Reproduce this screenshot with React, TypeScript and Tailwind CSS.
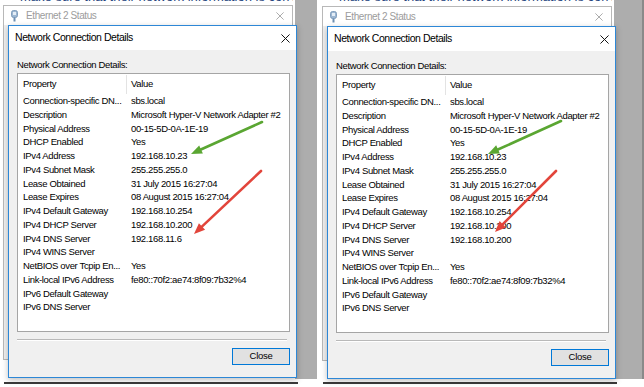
// Two "Network Connection Details" screenshots side by side, with arrows drawn over them.
type Row = [string, string];

const makeRows = (dns: string): Row[] => [
  ["Connection-specific DN...", "sbs.local"],
  ["Description", "Microsoft Hyper-V Network Adapter #2"],
  ["Physical Address", "00-15-5D-0A-1E-19"],
  ["DHCP Enabled", "Yes"],
  ["IPv4 Address", "192.168.10.23"],
  ["IPv4 Subnet Mask", "255.255.255.0"],
  ["Lease Obtained", "31 July 2015 16:27:04"],
  ["Lease Expires", "08 August 2015 16:27:04"],
  ["IPv4 Default Gateway", "192.168.10.254"],
  ["IPv4 DHCP Server", "192.168.10.200"],
  ["IPv4 DNS Server", dns],
  ["IPv4 WINS Server", ""],
  ["NetBIOS over Tcpip En...", "Yes"],
  ["Link-local IPv6 Address", "fe80::70f2:ae74:8f09:7b32%4"],
  ["IPv6 Default Gateway", ""],
  ["IPv6 DNS Server", ""],
];

function CloseX({ size, color }: { size: number; color: string }) {
  return (
    <svg width={size} height={size} viewBox="0 0 10 10" className="shrink-0">
      <path d="M0.5 0.5 L9.5 9.5 M9.5 0.5 L0.5 9.5" stroke={color} strokeWidth="1.1" fill="none" />
    </svg>
  );
}

function AdapterIcon() {
  return (
    <svg width="7" height="12" viewBox="0 0 7 12" className="shrink-0">
      <rect x="0.5" y="0.5" width="6" height="7" rx="2" fill="#9db7d2" stroke="#6f8fb2" strokeWidth="0.8" />
      <rect x="2" y="2" width="3" height="3" fill="#e4edf6" />
      <rect x="2.5" y="7.5" width="2" height="4" fill="#6f8fb2" />
    </svg>
  );
}

function Dialog({ dns }: { dns: string }) {
  return (
    <div className="flex h-[353px] w-[289px] flex-col border border-[#2d87d6] bg-[#f0f0f0] shadow-[0_2px_6px_rgba(0,0,0,0.25)]">
      <div className="flex h-[24px] shrink-0 items-center justify-between bg-white pl-[6px] pr-[6px]">
        <span className="text-[10.5px] tracking-[-0.45px] text-black">Network Connection Details</span>
        <CloseX size={9} color="#111" />
      </div>
      <div className="flex flex-1 flex-col pl-[8px] pr-[6px]">
        <div className="mt-[10px] text-[9.5px] leading-[10px] tracking-[-0.35px] text-black">
          Network Connection Details:
        </div>
        <div className="mt-[3px] h-[259px] shrink-0 border border-[#a5a5a5] bg-white text-[9.5px] tracking-[-0.35px] text-black">
          <div className="flex h-[20px] items-center">
            <span className="w-[108px] pl-[5px]">Property</span>
            <span className="h-[19px] w-px bg-[#e3e3e3]" />
            <span className="pl-[4px]">Value</span>
          </div>
          {makeRows(dns).map(([k, v]) => (
            <div key={k} className="flex h-[13.75px] items-center leading-[13.75px]">
              <span className="w-[113px] shrink-0 whitespace-nowrap pl-[5px]">{k}</span>
              <span className="whitespace-nowrap">{v}</span>
            </div>
          ))}
        </div>
        <div className="mt-[7px] w-[270px] border-t border-b border-t-[#b9b9b9] border-b-white" />
        <button
          type="button"
          className="mt-[7px] flex h-[17px] w-[58px] items-center justify-center self-end border border-[#0078d7] bg-[#e1e1e1] text-[9.5px] tracking-[-0.3px] text-black"
        >
          Close
        </button>
      </div>
    </div>
  );
}

function Screenshot({ dns, width, band, low }: { dns: string; width: string; band: string; low: boolean }) {
  return (
    <div className={`relative h-[387px] shrink-0 overflow-hidden bg-white ${width}`}>
      <div className="flex h-[379px]">
        {/* page text peeking above the captured windows */}
        <div className="h-[5px] w-[293px] shrink-0 overflow-hidden">
          <div className="-mt-[11px] whitespace-nowrap pl-[20px] text-[13px] leading-[15px] text-[#27457e]">
            make sure that their network information is correct
          </div>
        </div>
        <div className={`ml-[2px] flex-1 ${band}`} />
      </div>
      <div className="ml-[4px] mt-[3px] h-[2px] w-[294px] bg-[#3b3b3b]" />

      {/* Ethernet 2 Status window (behind) */}
      <div className={`absolute left-[3px] h-[355px] w-[290px] border border-[#b8b8b8] bg-[#f0f0f0] ${low ? "top-[6px]" : "top-[5px]"}`}>
        <div className="flex h-[19px] items-center justify-between bg-white pl-[7px] pr-[8px]">
          <div className="flex items-center gap-[8px]">
            <AdapterIcon />
            <span className="text-[10px] tracking-[-0.4px] text-[#9c9c9c]">Ethernet 2 Status</span>
          </div>
          <CloseX size={8} color="#a0a0a0" />
        </div>
      </div>

      {/* Network Connection Details dialog (front) */}
      <div className={`absolute left-[8px] ${low ? "top-[26px]" : "top-[25px]"}`}>
        <Dialog dns={dns} />
      </div>
    </div>
  );
}

function Arrow({ x1, y1, x2, y2, color }: { x1: number; y1: number; x2: number; y2: number; color: string }) {
  const dx = x2 - x1;
  const dy = y2 - y1;
  const len = Math.hypot(dx, dy);
  const ux = dx / len;
  const uy = dy / len;
  const head = 11;
  const half = 4.5;
  const bx = x2 - ux * head;
  const by = y2 - uy * head;
  const pts = `${x2},${y2} ${bx - uy * half},${by + ux * half} ${bx + uy * half},${by - ux * half}`;
  return (
    <g>
      <line x1={x1} y1={y1} x2={bx + ux * 2} y2={by + uy * 2} stroke={color} strokeWidth="2.6" strokeLinecap="round" />
      <polygon points={pts} fill={color} />
    </g>
  );
}

export default function App() {
  return (
    <div className="relative h-[387px] w-[644px] overflow-hidden bg-white font-['Liberation_Sans',Arial,sans-serif]">
      <div className="flex gap-[2px]">
        <Screenshot dns="192.168.11.6" width="w-[317px]" band="bg-[#adadad]" low={false} />
        <Screenshot dns="192.168.10.200" width="w-[325px]" band="bg-[#adadad] border-r-2 border-r-[#8a8a8a]" low />
      </div>
      <svg className="pointer-events-none absolute left-0 top-0" width="644" height="387">
        <Arrow x1={262} y1={122} x2={191} y2={154} color="#5aa632" />
        <Arrow x1={261} y1={171} x2={194} y2={234} color="#e2453b" />
        <Arrow x1={561} y1={121} x2={488} y2={154} color="#5aa632" />
        <Arrow x1={556} y1={171} x2={495} y2={232} color="#e2453b" />
      </svg>
    </div>
  );
}
